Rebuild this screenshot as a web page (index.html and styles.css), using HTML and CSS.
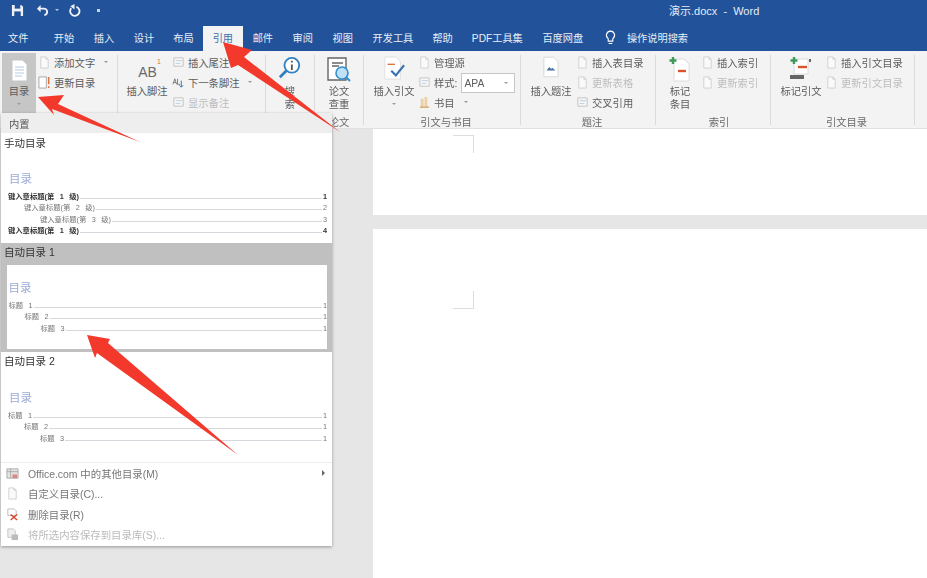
FILE: index.html
```html
<!DOCTYPE html>
<html lang="zh-CN">
<head>
  <meta charset="UTF-8" />
  <title>演示.docx - Word</title>
  <link rel="stylesheet" href="styles.css">
</head>
<body>
  <svg class="defs" width="0" height="0">
    <symbol id="doc" viewBox="0 0 12 14"><path d="M2 1h5.500l2.500 2.500V13H2z" fill="#fafafa" stroke="#cfcfcf"/><path d="M7.500 1v2.500H10" fill="none" stroke="#cfcfcf"/></symbol>
    <symbol id="docbang" viewBox="0 0 14 14"><path d="M1 1h8v12H1z" fill="#fff" stroke="#a5a5a5"/><path d="M11.500 1v8M11.500 11v2" stroke="#d9743b" stroke-width="1.600"/></symbol>
    <symbol id="note" viewBox="0 0 14 14"><path d="M2 2h10v9H2z" fill="#f6f6f6" stroke="#c2c2c2"/><path d="M4 5h7M4 8h5" stroke="#c0d0e0"/></symbol>
  </svg>

  <header class="titlebar">
    <div class="qat">
      <svg class="qat-icon" viewBox="0 0 14 14"><path d="M1 1h10l2 2v10H1z" fill="#eef2f8"/><path d="M4 1h6v4H4z" fill="#22539a"/><path d="M3.500 8h7v5h-7z" fill="#22539a"/></svg>
      <svg class="qat-icon undo" viewBox="0 0 14 14"><path d="M3 5h5a3.500 3.500 0 0 1 1 7" fill="none" stroke="#eef2f8" stroke-width="2"/><path d="M1 5l4-4v8z" fill="#eef2f8"/></svg>
      <span class="qat-caret"></span>
      <svg class="qat-icon redo" viewBox="0 0 14 14"><path d="M9 3A5 5 0 1 1 3.500 4.500" fill="none" stroke="#eef2f8" stroke-width="2"/><path d="M7 0v6L2.500 2.500z" fill="#eef2f8"/></svg>
      <span class="qat-dot"></span>
    </div>
    <div class="doc-title">演示.docx &nbsp;-&nbsp; Word</div>
  </header>

  <nav class="tabs">
    <span class="tab tab-file">文件</span>
    <span class="tab">开始</span>
    <span class="tab">插入</span>
    <span class="tab">设计</span>
    <span class="tab tab-narrow">布局</span>
    <span class="tab active">引用</span>
    <span class="tab">邮件</span>
    <span class="tab">审阅</span>
    <span class="tab">视图</span>
    <span class="tab">开发工具</span>
    <span class="tab tab-narrow">帮助</span>
    <span class="tab">PDF工具集</span>
    <span class="tab">百度网盘</span>
    <svg class="bulb" viewBox="0 0 12 16"><path d="M6 1a4.500 4.500 0 0 0-2.500 8.200V12h5V9.200A4.500 4.500 0 0 0 6 1z" fill="none" stroke="#fff" stroke-width="1.200"/><path d="M4 14.500h4" stroke="#fff" stroke-width="1.200"/></svg>
    <span class="search-hint">操作说明搜索</span>
  </nav>

  <section class="ribbon">
    <div class="group g-toc">
      <div class="group-body">
        <div class="big big-toc">
          <div class="big-icon">
            <svg width="15" height="21" viewBox="0 0 15 21"><path d="M.5.500h10l4 4v16H.500z" fill="#fff"/><path d="M3 7h9M3 10h9M3 13h9M3 16h7" stroke="#b5cbe3"/></svg>
          </div>
          <span>目录</span>
          <i class="caret"></i>
        </div>
        <div class="small-col">
          <div class="small"><svg><use href="#doc"/></svg>添加文字<i class="caret"></i></div>
          <div class="small"><svg><use href="#docbang"/></svg>更新目录</div>
        </div>
      </div>
    </div>

    <div class="group g-foot">
      <div class="group-body">
        <div class="big big-foot">
          <div class="big-icon ab">AB<sup>1</sup></div>
          <span>插入脚注</span>
        </div>
        <div class="small-col">
          <div class="small"><svg><use href="#note"/></svg>插入尾注</div>
          <div class="small"><svg viewBox="0 0 14 14"><path d="M1 9l2-6 2 6M2 7h2M6 3v6h2.500" stroke="#777" fill="none"/><path d="M10 5v7M8 10l2 2 2-2" stroke="#2b6cb0" fill="none"/></svg>下一条脚注<i class="caret"></i></div>
          <div class="small off"><svg><use href="#note"/></svg>显示备注</div>
        </div>
      </div>
    </div>

    <div class="group g-search">
      <div class="group-body">
        <div class="big big-wide">
          <div class="big-icon">
            <svg width="24" height="26" viewBox="0 0 26 28"><circle cx="15" cy="10" r="8" fill="#fff" stroke="#2f7fc1" stroke-width="2"/><path d="M9 16L2 23" stroke="#2f7fc1" stroke-width="3"/><path d="M15 9v6M15 5v2" stroke="#555" stroke-width="2"/></svg>
          </div>
          <span class="stacked">搜<br>索</span>
        </div>
      </div>
    </div>

    <div class="group g-check">
      <div class="group-body">
        <div class="big big-wide">
          <div class="big-icon">
            <svg width="24" height="28" viewBox="0 0 24 28"><path d="M1 2h18v22H1z" fill="#fff" stroke="#666" stroke-width="1.400"/><path d="M5 7h11M5 10h7" stroke="#666" stroke-width="1.400"/><circle cx="15" cy="17" r="6" fill="#bfe0f5" stroke="#2f8fd0" stroke-width="1.600"/><path d="M19 21l4 4" stroke="#2f8fd0" stroke-width="2"/></svg>
          </div>
          <span>论文<br>查重</span>
        </div>
      </div>
      <div class="group-label">论文</div>
    </div>

    <div class="group g-cite">
      <div class="group-body">
        <div class="big big-cite">
          <div class="big-icon">
            <svg width="22" height="24" viewBox="0 0 24 26"><path d="M2 1h12l5 5v19H2z" fill="#fff" stroke="#dedede"/><path d="M5 9h8" stroke="#d9743b" stroke-width="1.500"/><path d="M9 16l5 5 9-11" fill="none" stroke="#3a76ae" stroke-width="2.400"/></svg>
          </div>
          <span>插入引文</span>
          <i class="caret"></i>
        </div>
        <div class="small-col">
          <div class="small"><svg><use href="#doc"/></svg>管理源</div>
          <div class="small style-row"><svg><use href="#note"/></svg>样式:<div class="combo">APA<i class="caret"></i></div></div>
          <div class="small"><svg viewBox="0 0 14 14"><path d="M3 3h3v9H3zM7 1h3v11H7z" fill="#ecd0a4"/><path d="M2 12h10" stroke="#c98d3c"/></svg>书目<i class="caret"></i></div>
        </div>
      </div>
      <div class="group-label">引文与书目</div>
    </div>

    <div class="group g-caption">
      <div class="group-body">
        <div class="big big-caption">
          <div class="big-icon">
            <svg width="16" height="22" viewBox="0 0 18 24"><path d="M1 1h11l5 5v17H1z" fill="#fff" stroke="#d4d4d4"/><path d="M4 16l3-4 2 2 2-1 3 3z" fill="#4a73a0"/></svg>
          </div>
          <span>插入题注</span>
        </div>
        <div class="small-col">
          <div class="small"><svg><use href="#doc"/></svg>插入表目录</div>
          <div class="small off"><svg><use href="#doc"/></svg>更新表格</div>
          <div class="small"><svg><use href="#note"/></svg>交叉引用</div>
        </div>
      </div>
      <div class="group-label">题注</div>
    </div>

    <div class="group g-index">
      <div class="group-body">
        <div class="big big-index">
          <div class="big-icon">
            <svg width="24" height="26" viewBox="0 0 24 26"><path d="M6 3h10l5 5v17H6z" fill="#fff" stroke="#dcdcdc"/><path d="M10 15h8" stroke="#d9542b" stroke-width="2.400"/><path d="M5 1v7M1.500 4.500h7" stroke="#3f9a5a" stroke-width="2.400"/></svg>
          </div>
          <span>标记<br>条目</span>
        </div>
        <div class="small-col">
          <div class="small"><svg><use href="#doc"/></svg>插入索引</div>
          <div class="small off"><svg><use href="#doc"/></svg>更新索引</div>
        </div>
      </div>
      <div class="group-label">索引</div>
    </div>

    <div class="group g-auth">
      <div class="group-body">
        <div class="big big-auth">
          <div class="big-icon">
            <svg width="26" height="26" viewBox="0 0 26 26"><path d="M6 3h14v15H6z" fill="#fff" stroke="#dcdcdc"/><path d="M10 11h9" stroke="#d9542b" stroke-width="2.400"/><path d="M6 1v7M2.500 4.500h7" stroke="#3f9a5a" stroke-width="2.400"/><path d="M2 19h14v4H2z" fill="#666"/><path d="M21 3h2v3h-2z" fill="#666"/></svg>
          </div>
          <span>标记引文</span>
        </div>
        <div class="small-col">
          <div class="small"><svg><use href="#doc"/></svg>插入引文目录</div>
          <div class="small off"><svg><use href="#doc"/></svg>更新引文目录</div>
        </div>
      </div>
      <div class="group-label">引文目录</div>
    </div>
  </section>

  <main class="workspace">
    <div class="page page-first"><div class="crop crop-top"></div></div>
    <div class="page page-second"><div class="crop crop-bottom"></div></div>
  </main>

  <aside class="menu">
    <div class="menu-head">内置</div>

    <div class="toc-item toc-manual">
      <div class="toc-name">手动目录</div>
      <div class="toc-heading">目录</div>
      <div class="toc-row strong"><span>键入章标题(第 1 级)</span><b></b><span>1</span></div>
      <div class="toc-row lv2"><span>键入章标题(第 2 级)</span><b></b><span>2</span></div>
      <div class="toc-row lv3"><span>键入章标题(第 3 级)</span><b></b><span>3</span></div>
      <div class="toc-row strong"><span>键入章标题(第 1 级)</span><b></b><span>4</span></div>
    </div>

    <div class="toc-item toc-hover">
      <div class="toc-name">自动目录 1</div>
      <div class="toc-preview">
        <div class="toc-heading">目录</div>
        <div class="toc-row"><span>标题 1</span><b></b><span>1</span></div>
        <div class="toc-row lv2"><span>标题 2</span><b></b><span>1</span></div>
        <div class="toc-row lv3"><span>标题 3</span><b></b><span>1</span></div>
      </div>
    </div>

    <div class="toc-item toc-auto">
      <div class="toc-name">自动目录 2</div>
      <div class="toc-heading">目录</div>
      <div class="toc-row"><span>标题 1</span><b></b><span>1</span></div>
      <div class="toc-row lv2"><span>标题 2</span><b></b><span>1</span></div>
      <div class="toc-row lv3"><span>标题 3</span><b></b><span>1</span></div>
    </div>

    <div class="menu-actions">
      <div class="action">
        <svg viewBox="0 0 14 14"><path d="M1 2h12v10H1z" fill="#e4e4e4" stroke="#a9a9a9"/><path d="M1 5h12M5 2v10" stroke="#a9a9a9"/><path d="M7 8h5v4H7z" fill="#d98a80"/></svg>
        <span>Office.com 中的其他目录(M)</span><i class="more"></i>
      </div>
      <div class="action">
        <svg><use href="#doc"/></svg>
        <span>自定义目录(C)...</span>
      </div>
      <div class="action">
        <svg viewBox="0 0 14 14"><path d="M2 1h7l2 2v5H2z" fill="#fff" stroke="#bbb"/><path d="M5 7l7 6M12 7l-7 6" stroke="#d9442b" stroke-width="1.500"/></svg>
        <span>删除目录(R)</span>
      </div>
      <div class="action off">
        <svg viewBox="0 0 14 14"><path d="M2 1h6l2 2v7H2z" fill="#eee" stroke="#c4c4c4"/><path d="M6 7h7v6H6z" fill="#bbb"/></svg>
        <span>将所选内容保存到目录库(S)...</span>
      </div>
    </div>
  </aside>

  <svg class="arrows" width="927" height="578" viewBox="0 0 927 578">
    <path d="M223 42L252 50 244 57 340 132 238 65 231 68z"/>
    <path d="M38 97L64 95 58 104 140 142 52 109 54 115z"/>
    <path d="M87 335L110 339 108 343 238 455 97 353 95 358z"/>
  </svg>
</body>
</html>
```

FILE: styles.css
```css
* {
  box-sizing: border-box;
}

html, body {
  margin: 0;
  height: 578px;
  overflow: hidden;
}

body {
  display: flex;
  flex-direction: column;
  position: relative;
  font-family: "Liberation Sans", "Noto Sans CJK SC", sans-serif;
  font-size: 10.300px;
  color: #5c5c5c;
  background: #e6e6e6;
  filter: blur(.55px);
}

.defs {
  position: absolute;
}

/* title bar */
.titlebar {
  height: 25px;
  flex: none;
  display: flex;
  align-items: center;
  padding-bottom: 5px;
  background: #22539a;
  color: #e6ecf5;
}

.qat {
  display: flex;
  align-items: center;
  width: 669px;
  padding-left: 11px;
}

.qat-icon {
  width: 13px;
  height: 13px;
}

.undo {
  margin-left: 12px;
}

.qat-caret {
  margin-left: 6px;
  border: 2px solid transparent;
  border-top-color: #b9c9e0;
  border-bottom: 0;
  width: 0;
}

.redo {
  margin-left: 9px;
}

.qat-dot {
  width: 3px;
  height: 3px;
  margin-left: 16px;
  background: #c6d4e8;
}

.doc-title {
  font-size: 11px;
}

/* tabs */
.tabs {
  height: 26px;
  flex: none;
  display: flex;
  align-items: stretch;
  background: #22539a;
  color: #e8eef6;
  font-size: 10.200px;
  line-height: 27px;
}

.tab {
  padding: 0 9.800px;
  white-space: nowrap;
}

.tab-file {
  width: 44px;
  padding: 0 0 0 8px;
}

.tab-narrow {
  padding: 0 9.300px;
}

.tab.active {
  background: #f3f3f3;
  color: #3d6fb0;
  margin-top: 1px;
  line-height: 25px;
}

.bulb {
  width: 11px;
  height: 15px;
  margin: 5px 0 0 12px;
}

.search-hint {
  margin-left: 11px;
}

/* ribbon */
.ribbon {
  height: 78px;
  flex: none;
  display: flex;
  background: #f3f3f3;
  border-bottom: 1px solid #e0e0e0;
}

.group {
  height: 70px;
  margin-top: 4px;
  border-right: 1px solid #dadada;
  flex: none;
}

.g-toc { width: 118px; padding-left: 2px; }
.g-foot { width: 148px; padding-left: 7px; }
.g-search { width: 49px; }
.g-check { width: 49px; }
.g-cite { width: 157px; padding-left: 8px; }
.g-caption { width: 135px; padding-left: 8px; }
.g-index { width: 115px; padding-left: 12px; }
.g-auth { width: 144px; padding-left: 8px; }

.group-body {
  height: 63px;
  margin-top: -2px;
  display: flex;
}

.group-label {
  text-align: center;
  line-height: 14px;
  color: #6a6a6a;
}

.big {
  display: flex;
  flex-direction: column;
  align-items: center;
  line-height: 13px;
  text-align: center;
}

.big-icon {
  height: 32px;
  padding-top: 3px;
  display: flex;
  justify-content: center;
}

.big-toc {
  width: 34px;
  height: 60px;
  background: #c6c6c6;
}

.big-toc .big-icon {
  padding-top: 7px;
}

.big .caret {
  margin: 5px 0 0;
}

.big-foot { width: 44px; }
.big-wide { width: 48px; }
.big-cite { width: 44px; }
.big-caption { width: 44px; }
.big-index { width: 24px; }
.big-auth { width: 44px; }

.ab {
  font-size: 14px;
  line-height: 20px;
  padding: 9px 0 0 5px;
  color: #6a6a6a;
}

.ab sup {
  font-size: 7px;
  line-height: 0;
  color: #d9743b;
}

.caret {
  display: inline-block;
  width: 0;
  margin-left: 5px;
  border: 2px solid transparent;
  border-top-color: #999;
  border-bottom: 0;
}

.small-col {
  margin-left: 2px;
  display: flex;
  flex-direction: column;
}

.g-foot .small-col { margin-left: 3px; }
.g-cite .small-col { margin-left: 2px; }
.g-caption .small-col { margin-left: 3px; }
.g-index .small-col { margin-left: 9px; }
.g-auth .small-col { margin-left: 2px; }

.small {
  height: 20px;
  padding-bottom: 2px;
  display: flex;
  align-items: center;
  gap: 3px;
  white-space: nowrap;
}

.small svg {
  width: 13px;
  height: 13px;
  flex: none;
}

.small .caret {
  margin-left: 6px;
}

.off {
  color: #bdbdbd;
}

.combo {
  width: 54px;
  height: 20px;
  margin: 2px 0 0 1px;
  padding: 0 6px 0 2px;
  display: flex;
  align-items: center;
  justify-content: space-between;
  background: #fff;
  border: 1px solid #c6c6c6;
}

/* document area */
.workspace {
  flex: 1;
  display: flex;
  flex-direction: column;
  gap: 14px;
  padding-left: 373px;
  min-height: 0;
}

.page {
  background: #fff;
}

.page-first {
  height: 86px;
  flex: none;
}

.page-second {
  flex: 1;
}

.crop {
  width: 21px;
  height: 18px;
  margin-left: 80px;
  border-right: 1px solid #ddd;
}

.crop-top {
  border-top: 1px solid #ddd;
  transform: translateY(6px);
}

.crop-bottom {
  border-bottom: 1px solid #ddd;
  transform: translateY(62px);
}

/* dropdown */
.menu {
  position: absolute;
  left: 1px;
  top: 113px;
  width: 331px;
  height: 433px;
  display: flex;
  flex-direction: column;
  background: #fff;
  box-shadow: 0 1px 3px rgba(0, 0, 0, .35);
}

.menu-head {
  height: 20px;
  padding-left: 8px;
  line-height: 23px;
  background: #eee;
  color: #555;
}

.toc-item {
  flex: none;
  padding: 0 5px 0 7px;
}

.toc-manual { height: 110px; }
.toc-hover { height: 109px; background: #c0c0c0; padding: 0 5px 3px 6px; }
.toc-auto { height: 110px; }

.toc-name {
  margin-left: -4px;
  padding-top: 3px;
  height: 19px;
  line-height: 15px;
  font-size: 10.500px;
  color: #333;
}

.toc-hover .toc-name {
  margin-left: -3px;
  height: 22px;
  padding-top: 2px;
}

.toc-auto .toc-name {
  padding-top: 2px;
}

.toc-preview {
  height: 84px;
  background: #fff;
  padding: 13px 0 0 1.500px;
}

.toc-heading {
  margin: 17px 0 0 1px;
  height: 21.500px;
  line-height: 20px;
  font-size: 11.500px;
  color: #9aabd6;
}

.toc-preview .toc-heading {
  margin: 0;
}

.toc-row {
  height: 11.500px;
  display: flex;
  align-items: center;
  font-size: 7.300px;
  word-spacing: 3.500px;
  line-height: 11px;
  color: #777;
}

.toc-row b {
  flex: 1;
  margin: 4px 1px 0;
  border-bottom: 1px solid #d6d8de;
}

.toc-row.strong {
  color: #333;
  font-weight: 700;
}

.lv2 { padding-left: 16px; }
.lv3 { padding-left: 32px; }

.menu-actions {
  border-top: 1px solid #eee;
}

.action {
  height: 20.500px;
  display: flex;
  align-items: center;
  padding-right: 7px;
  font-size: 10.400px;
  color: #777;
}

.action svg {
  width: 13px;
  height: 13px;
  margin: 0 9px 0 5px;
  flex: none;
}

.action span {
  flex: 1;
}

.action.off {
  color: #bbb;
}

.more {
  border: 3px solid transparent;
  border-left-color: #666;
  border-right: 0;
}

/* the red marks drawn over the screenshot */
.arrows {
  position: absolute;
  left: 0;
  top: 0;
  pointer-events: none;
}

.arrows path {
  fill: #f2392b;
}
```
